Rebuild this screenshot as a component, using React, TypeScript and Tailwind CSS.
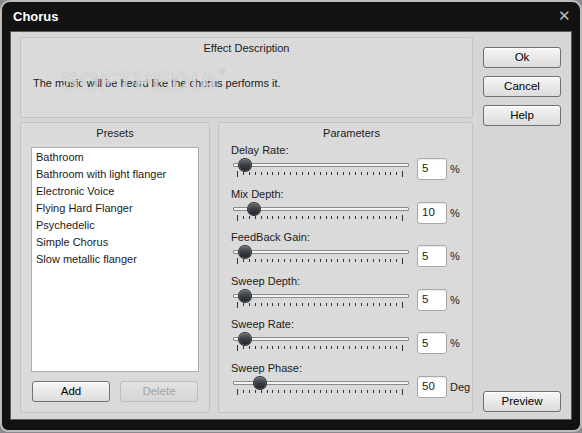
const presets = [
  'Bathroom',
  'Bathroom with light flanger',
  'Electronic Voice',
  'Flying Hard Flanger',
  'Psychedelic',
  'Simple Chorus',
  'Slow metallic flanger',
];

const params = [
  { label: 'Delay Rate:', value: '5', unit: '%', pos: 12 },
  { label: 'Mix Depth:', value: '10', unit: '%', pos: 21 },
  { label: 'FeedBack Gain:', value: '5', unit: '%', pos: 12 },
  { label: 'Sweep Depth:', value: '5', unit: '%', pos: 12 },
  { label: 'Sweep Rate:', value: '5', unit: '%', pos: 12 },
  { label: 'Sweep Phase:', value: '50', unit: 'Deg', pos: 27 },
];

function Button({ children, disabled }: { children: React.ReactNode; disabled?: boolean }) {
  return (
    <button
      className={
        disabled
          ? 'h-[21px] w-[78px] rounded-[3px] border border-[#bdbdbd] bg-gradient-to-b from-[#e2e2e2] to-[#d6d6d6] text-[11.5px] text-[#a3a3a3]'
          : 'h-[21px] w-[78px] rounded-[3px] border border-[#707070] bg-gradient-to-b from-[#f6f6f6] to-[#dcdcdc] text-[11.5px] text-black shadow-[inset_0_1px_0_#fff]'
      }
    >
      {children}
    </button>
  );
}

function Ticks() {
  const xs = Array.from({ length: 29 }, (_, i) => 4 + i * 5.9);
  return (
    <svg width="176" height="8" className="block">
      {xs.map((x, i) => (
        <line
          key={i}
          x1={Math.round(x) + 0.5}
          x2={Math.round(x) + 0.5}
          y1={i === 0 || i === xs.length - 1 ? 1 : 2}
          y2={i === 0 || i === xs.length - 1 ? 7 : 5}
          stroke="#333"
          strokeWidth="1"
        />
      ))}
    </svg>
  );
}

function Slider({ pos }: { pos: number }) {
  return (
    <div className="relative h-[22px] w-[176px]">
      <div className="absolute left-0 right-0 top-[5px] h-[4px] rounded-[1px] border border-[#8a8a8a] bg-[#f4f4f4]" />
      <div
        className="absolute top-[1px] h-[12px] w-[12px] rounded-full bg-gradient-to-b from-[#6a6f75] via-[#3a3f46] to-[#22262b] shadow-[0_0_0_1px_#2a2a2a]"
        style={{ left: pos - 6 }}
      />
      <div className="absolute left-0 top-[12px]">
        <Ticks />
      </div>
    </div>
  );
}

export default function App() {
  return (
    <div className="h-[433px] w-[582px] bg-[#8c8a8e] font-['Liberation_Sans',Arial,sans-serif] text-[11px] text-[#1a1a1a]">
      <div className="h-[432px] w-[582px] rounded-t-[10px] rounded-b-[8px] border-2 border-[#bdbdbd] bg-[#121212] pt-0">
        <div className="relative flex h-[29px] items-center px-[11px]">
          <span className="text-[13px] font-bold text-white">Chorus</span>
          <span className="absolute right-[9px] top-[6px] text-[15px] leading-none text-[#bfbfbf]">✕</span>
        </div>
        <div className="mx-[8px] flex h-[389px] border border-[#5a5a5a] bg-[#d6d6d6] pl-[9px] pt-[5px]">
          <div className="flex w-[453px] flex-col gap-[4px]">
            {/* Effect description */}
            <div className="relative h-[81px] rounded-[2px] border border-[#c2c2c2] bg-[#dadada]">
              <div className="pt-[2px] text-center leading-[16px]">Effect Description</div>
              <div className="pl-[12px] pt-[19px] leading-[16px]">The music will be heard like the chorus performs it.</div>
              <div className="pointer-events-none absolute left-[40px] top-[30px] text-[26px] font-bold leading-none tracking-[1px] text-[#eeeeee]/70 [text-shadow:0_0_1px_rgba(0,0,0,0.25)]">
                SOFTPEDIA<span className="align-top text-[9px]">®</span>
              </div>
            </div>
            <div className="flex h-[291px] gap-[8px]">
              {/* Presets */}
              <div className="flex w-[190px] flex-col rounded-[2px] border border-[#c2c2c2] bg-[#dadada] px-[10px]">
                <div className="pt-[2px] text-center leading-[16px]">Presets</div>
                <div className="mt-[6px] h-[225px] border border-[#adadad] bg-white pl-[4px] pt-[1px]">
                  {presets.map((p) => (
                    <div key={p} className="leading-[17px]">{p}</div>
                  ))}
                </div>
                <div className="mt-[9px] flex justify-between px-[1px]">
                  <Button>Add</Button>
                  <Button disabled>Delete</Button>
                </div>
              </div>
              {/* Parameters */}
              <div className="flex w-[255px] flex-col rounded-[2px] border border-[#c2c2c2] bg-[#dadada] pl-[12px]">
                <div className="pt-[2px] text-center leading-[16px]">Parameters</div>
                <div className="mt-[1px] flex flex-col">
                  {params.map((p) => (
                    <div key={p.label} className="h-[43.6px]">
                      <div className="leading-[16px]">{p.label}</div>
                      <div className="flex items-start">
                        <div className="ml-[2px]">
                          <Slider pos={p.pos} />
                        </div>
                        <div className="ml-[8px] flex h-[22px] w-[30px] items-center rounded-[3px] border border-[#a8a8a8] bg-white pl-[4px] text-[11.5px] shadow-[inset_0_1px_1px_rgba(0,0,0,0.08)]">
                          {p.value}
                        </div>
                        <div className="ml-[3px] pt-[4px] leading-[14px]">{p.unit}</div>
                      </div>
                    </div>
                  ))}
                </div>
              </div>
            </div>
          </div>
          <div className="ml-[10px] flex flex-col pb-[7px] pt-[10px]">
            <div className="flex flex-col gap-[8px]">
              <Button>Ok</Button>
              <Button>Cancel</Button>
              <Button>Help</Button>
            </div>
            <div className="mt-auto">
              <Button>Preview</Button>
            </div>
          </div>
        </div>
      </div>
    </div>
  );
}
